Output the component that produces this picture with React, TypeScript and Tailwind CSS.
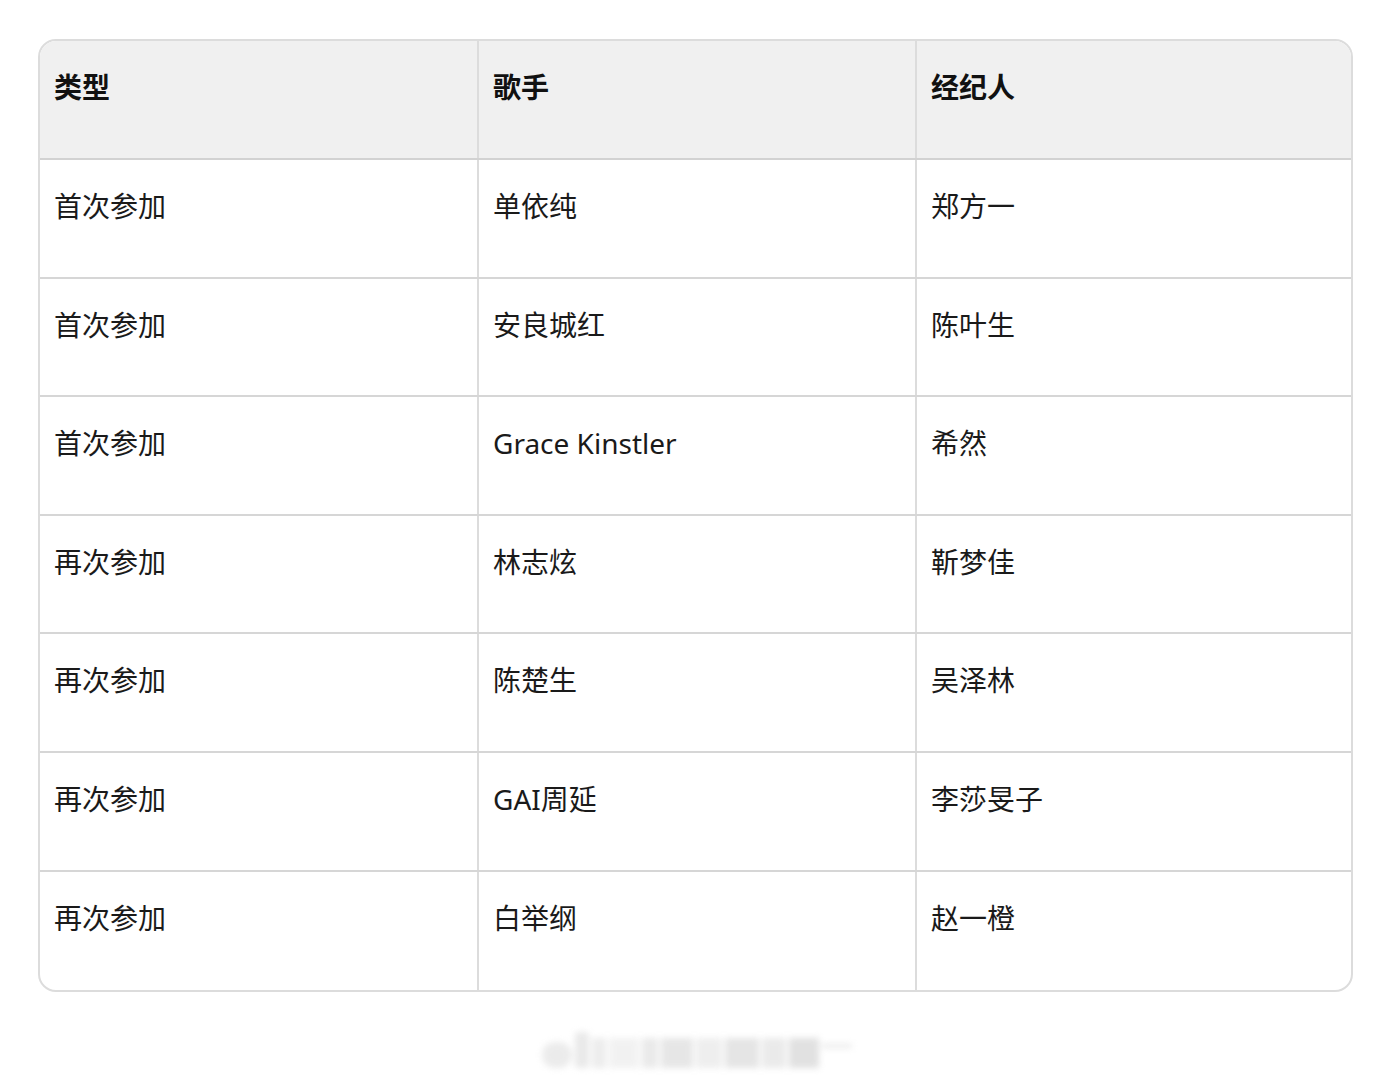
import React from 'react';

const rows: [string, string, string][] = [
  ['首次参加', '单依纯', '郑方一'],
  ['首次参加', '安良城红', '陈叶生'],
  ['首次参加', 'Grace Kinstler', '希然'],
  ['再次参加', '林志炫', '靳梦佳'],
  ['再次参加', '陈楚生', '吴泽林'],
  ['再次参加', 'GAI周延', '李莎旻子'],
  ['再次参加', '白举纲', '赵一橙'],
];

const font = { fontFamily: '"Noto Sans", "Noto Sans CJK SC", sans-serif' };

export default function App() {
  return (
    <div className="w-[1391px] h-[1080px] bg-white" style={font}>
      <div className="pt-[39px] pl-[38px]">
        <div className="w-[1315px] border-2 border-[#dcdcdc] rounded-[18px] overflow-hidden">
          <div className="grid grid-cols-[437px_438px_1fr] h-[119px] bg-[#f0f0f0] border-b-2 border-[#d2d2d2]">
            {['类型', '歌手', '经纪人'].map((h, i) => (
              <div
                key={h}
                className={`pl-[14px] pt-[26px] text-[28px] leading-[40px] font-bold text-[#111] ${i > 0 ? 'border-l-2 border-[#dcdcdc]' : ''}`}
              >
                {h}
              </div>
            ))}
          </div>
          {rows.map((r, ri) => (
            <div
              key={ri}
              className={`grid grid-cols-[437px_438px_1fr] h-[118.6px] ${ri < rows.length - 1 ? 'border-b-2 border-[#d6d6d6]' : ''}`}
            >
              {r.map((c, ci) => (
                <div
                  key={ci}
                  className={`pl-[14px] pt-[26px] text-[28px] leading-[40px] text-[#1a1a1a] ${ci > 0 ? 'border-l-2 border-[#dcdcdc]' : ''}`}
                >
                  {c}
                </div>
              ))}
            </div>
          ))}
        </div>
      </div>
      {/* blurred watermark */}
      <div className="flex justify-center pt-[40px] pl-[2px]">
        <div className="flex items-end gap-[3px] blur-[3px] opacity-45">
          <div className="w-[30px] h-[26px] rounded-full bg-[#d4d4d4]" />
          <div className="w-[14px] h-[36px] rounded bg-[#cfcfcf]" />
          <div className="w-[14px] h-[30px] bg-[#d6d6d6]" />
          <div className="w-[30px] h-[30px] bg-[#e2e2e2]" />
          <div className="w-[16px] h-[30px] bg-[#d0d0d0]" />
          <div className="w-[32px] h-[30px] bg-[#c9c9c9]" />
          <div className="w-[26px] h-[30px] bg-[#dadada]" />
          <div className="w-[34px] h-[30px] bg-[#c6c6c6]" />
          <div className="w-[24px] h-[30px] bg-[#d2d2d2]" />
          <div className="w-[30px] h-[30px] bg-[#bdbdbd]" />
          <div className="w-[30px] h-[4px] mb-[20px] bg-[#d0d0d0]" />
        </div>
      </div>
    </div>
  );
}
